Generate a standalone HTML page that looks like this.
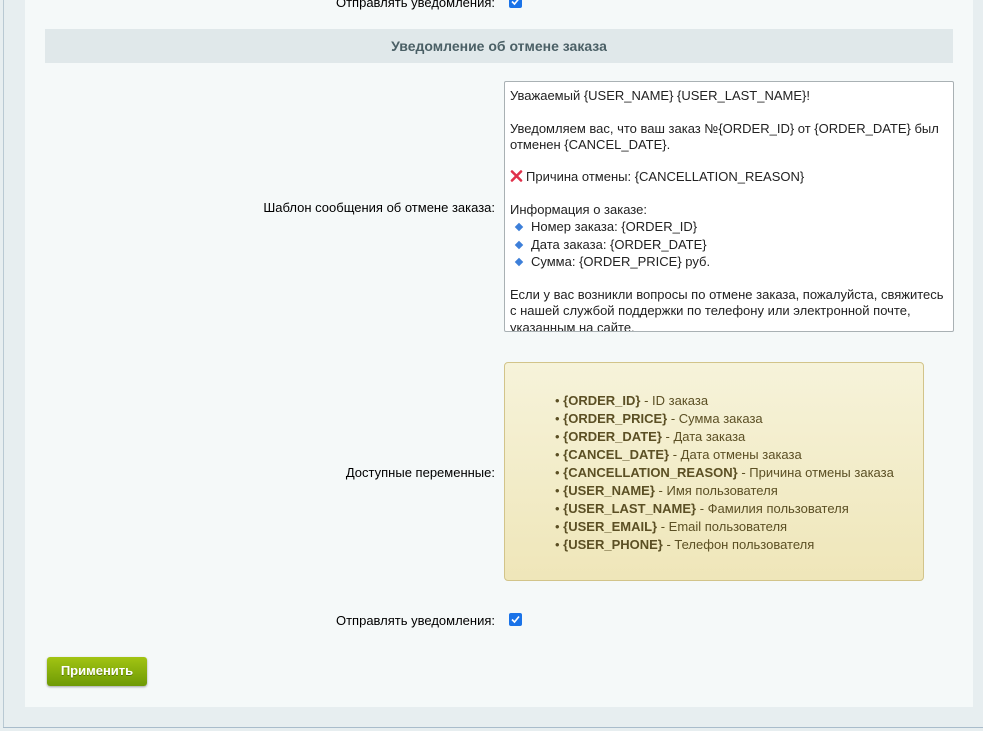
<!DOCTYPE html>
<html><head><meta charset="utf-8"><style>
*{margin:0;padding:0;box-sizing:border-box}
body{width:983px;height:731px;overflow:hidden;background:#e7eef0;font-family:"Liberation Sans",Arial,sans-serif;font-size:13px;color:#000;position:relative}
.lb{position:absolute;left:3px;top:0;width:1px;height:727px;background:#b9c9d3}
.bb{position:absolute;left:3px;top:727px;width:980px;height:1px;background:#a9bccb}
.panel{position:absolute;left:25px;top:0;width:948px;height:707px;background:#f5f9f9}
.a{position:absolute}
.lbl{position:absolute;right:488px;text-align:right;white-space:nowrap}
.cb{position:absolute;width:13px;height:13px;background:#1a73e8;border-radius:2px}
.cb svg{position:absolute;left:1px;top:1px}
.hdr{left:45px;top:29px;width:908px;height:34px;background:#e0e8ea;text-align:center;line-height:34px;font-weight:bold;font-size:14px;color:#4b6066}
.ta{left:504px;top:81px;width:450px;height:251px;background:#fff;border:1px solid #a9b1b4;border-radius:2px;padding:6px 5px;line-height:16.3px;color:#222;overflow:hidden}
.ta p{white-space:nowrap;height:16.3px}
.ta p.bl{height:17.5px;line-height:17.5px}
.dia{display:inline-block;width:6px;height:6px;background:#3d7fd9;transform:rotate(45deg);margin:0 9px 1px 6px}
.note{left:504px;top:362px;width:420px;height:219px;border:1px solid #d2c48a;border-radius:4px;background:linear-gradient(#f6f3da,#efe6b9);color:#5b4f24;padding:29px 0 0 50px;line-height:18px}
.note div{white-space:nowrap}
.note b{font-weight:bold}
.btn{left:47px;top:657px;width:100px;height:29px;border-radius:3px;background:linear-gradient(#a2c413,#6e9a05);box-shadow:0 1px 2px rgba(0,0,0,.35);color:#fff;font-weight:bold;text-align:center;line-height:28px;text-shadow:0 1px 0 rgba(0,0,0,.3)}
</style></head><body>
<div class="lb"></div><div class="bb"></div>
<div class="panel"></div>
<div class="lbl" style="top:-5px">Отправлять уведомления:</div>
<div class="cb" style="left:509px;top:-5px"><svg width="11" height="11" viewBox="0 0 11 11"><path d="M2 5.5L4.5 8L9 2.5" stroke="#fff" stroke-width="1.6" fill="none"/></svg></div>
<div class="a hdr">Уведомление об отмене заказа</div>
<div class="a ta">
<p>Уважаемый {USER_NAME} {USER_LAST_NAME}!</p><p>&nbsp;</p>
<p>Уведомляем вас, что ваш заказ №{ORDER_ID} от {ORDER_DATE} был</p>
<p>отменен {CANCEL_DATE}.</p><p>&nbsp;</p>
<p><svg width="13" height="12" viewBox="0 0 13 12" style="vertical-align:-1px;margin-right:3px"><path d="M2 1.5L11 10.5M11 1.5L2 10.5" stroke="#e0314b" stroke-width="2.6" stroke-linecap="round"/></svg>Причина отмены: {CANCELLATION_REASON}</p><p>&nbsp;</p>
<p>Информация о заказе:</p>
<p class="bl"><span class="dia"></span>Номер заказа: {ORDER_ID}</p>
<p class="bl"><span class="dia"></span>Дата заказа: {ORDER_DATE}</p>
<p class="bl"><span class="dia"></span>Сумма: {ORDER_PRICE} руб.</p><p>&nbsp;</p>
<p>Если у вас возникли вопросы по отмене заказа, пожалуйста, свяжитесь</p>
<p>с нашей службой поддержки по телефону или электронной почте,</p>
<p>указанным на сайте.</p>
</div>
<div class="lbl" style="top:200px">Шаблон сообщения об отмене заказа:</div>
<div class="a note">
<div>• <b>{ORDER_ID}</b> - ID заказа</div>
<div>• <b>{ORDER_PRICE}</b> - Сумма заказа</div>
<div>• <b>{ORDER_DATE}</b> - Дата заказа</div>
<div>• <b>{CANCEL_DATE}</b> - Дата отмены заказа</div>
<div>• <b>{CANCELLATION_REASON}</b> - Причина отмены заказа</div>
<div>• <b>{USER_NAME}</b> - Имя пользователя</div>
<div>• <b>{USER_LAST_NAME}</b> - Фамилия пользователя</div>
<div>• <b>{USER_EMAIL}</b> - Email пользователя</div>
<div>• <b>{USER_PHONE}</b> - Телефон пользователя</div>
</div>
<div class="lbl" style="top:465px">Доступные переменные:</div>
<div class="lbl" style="top:613px">Отправлять уведомления:</div>
<div class="cb" style="left:509px;top:613px"><svg width="11" height="11" viewBox="0 0 11 11"><path d="M2 5.5L4.5 8L9 2.5" stroke="#fff" stroke-width="1.6" fill="none"/></svg></div>
<div class="a btn">Применить</div>
</body></html>
